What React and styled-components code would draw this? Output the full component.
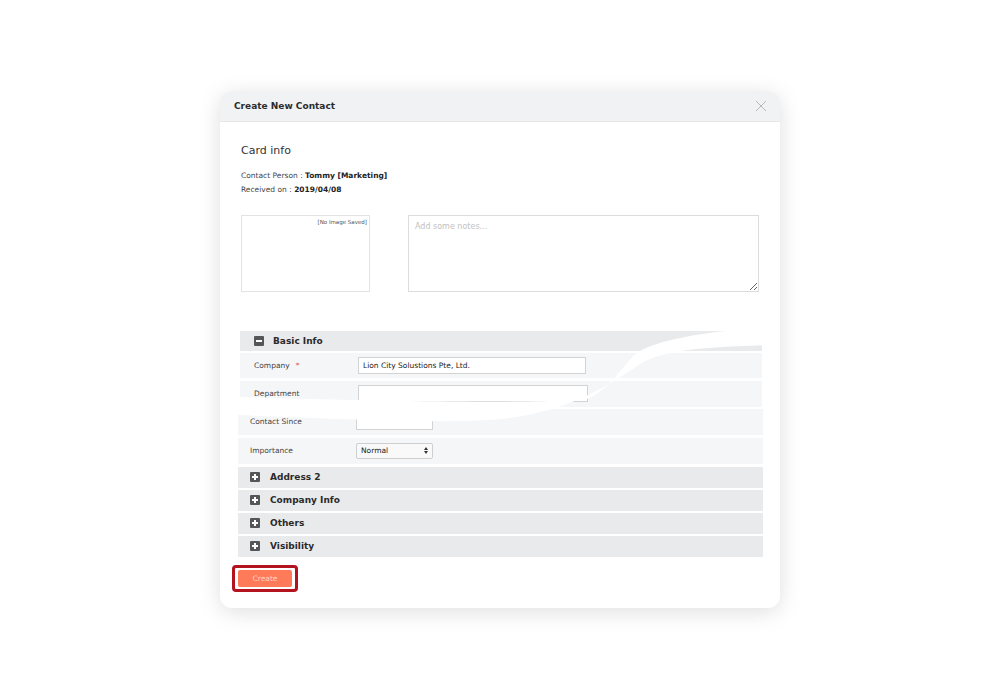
import styled, { createGlobalStyle } from "styled-components"

const GlobalStyle = createGlobalStyle`
  html, body {
    margin: 0;
    padding: 0;
    background: #fff;
    font-family: "DejaVu Sans", Verdana, sans-serif;
    color: #333;
  }
`

const Page = styled.div`
  height: 700px;
  display: flex;
  align-items: center;
  justify-content: center;
`

const Modal = styled.div`
  width: 560px;
  height: 517px;
  margin-top: -2px;
  background: #fff;
  border-radius: 12px;
  overflow: hidden;
  box-shadow: 0 4px 22px rgba(0, 0, 0, 0.13);
  display: flex;
  flex-direction: column;
`

const Header = styled.div`
  height: 31px;
  flex: none;
  background: #f1f2f4;
  border-bottom: 1px solid #e6e7e9;
  box-sizing: border-box;
  display: flex;
  align-items: center;
  justify-content: space-between;
  padding: 0 13px 0 14px;
`

const Title = styled.div`
  font-size: 9px;
  font-weight: bold;
  color: #2b2b2b;
`

const Body = styled.div`
  padding: 0 17px 0 18px;
`

const CardTitle = styled.div`
  margin: 22px 0 0 3px;
  font-size: 11px;
  color: #333;
`

const MetaBlock = styled.div`
  margin: 12px 0 0 3px;
  font-size: 7.5px;
  line-height: 14px;
  color: #444;
  b {
    color: #222;
  }
`

const Attach = styled.div`
  display: flex;
  gap: 38px;
  margin: 18px 0 0 3px;
`

const ImageBox = styled.div`
  width: 129px;
  height: 77px;
  box-sizing: border-box;
  border: 1px solid #e3e3e3;
  font-size: 5.5px;
  color: #555;
  text-align: right;
  padding: 3px 2px;
`

const Notes = styled.textarea`
  width: 351px;
  height: 77px;
  box-sizing: border-box;
  border: 1px solid #dcdcdc;
  font-family: inherit;
  font-size: 8px;
  padding: 6px 6px;
  color: #333;
  &::placeholder {
    color: #c2c2c2;
  }
`

const Form = styled.div`
  position: relative;
  margin-top: 39px;
`

const Piece = styled.div`
  margin-left: ${(p) => p.$shift}px;
  width: ${(p) => p.$width}px;
`

const SectionBar = styled.div`
  height: ${(p) => (p.$tall ? 20 : 21)}px;
  margin-top: ${(p) => p.$mt}px;
  background: #e9eaec;
  display: flex;
  align-items: center;
  gap: ${(p) => p.$gap}px;
  padding-left: ${(p) => p.$pad}px;
  font-size: 9px;
  font-weight: bold;
  color: #2b2b2b;
`

const Toggle = styled.span`
  width: 10px;
  height: 10px;
  background: #55565a;
  border-radius: 1px;
  position: relative;
  flex: none;
  &::before,
  &::after {
    content: "";
    position: absolute;
    background: #fff;
    left: 2px;
    top: 4px;
    width: 6px;
    height: 2px;
  }
  &::after {
    display: ${(p) => (p.$open ? "none" : "block")};
    left: 4px;
    top: 2px;
    width: 2px;
    height: 6px;
  }
`

const FieldRow = styled.div`
  height: ${(p) => p.$h || 26}px;
  margin-top: ${(p) => p.$mt}px;
  background: #f5f6f8;
  display: flex;
  align-items: center;
  padding-left: ${(p) => p.$pad}px;
`

const Label = styled.div`
  width: ${(p) => p.$w}px;
  flex: none;
  font-size: 7.5px;
  color: #444;
  span {
    color: #e8505b;
    margin-left: 6px;
  }
`

const TextInput = styled.div`
  width: ${(p) => p.$w}px;
  height: 17px;
  box-sizing: border-box;
  border: 1px solid #d3d3d3;
  background: #fff;
  font-size: 7.5px;
  color: #222;
  padding: 0 4px;
  display: flex;
  align-items: center;
`

const Select = styled.div`
  width: 77px;
  height: 16px;
  box-sizing: border-box;
  border: 1px solid #cfcfcf;
  border-radius: 2px;
  background: #f9f9f9;
  font-size: 7.5px;
  color: #222;
  padding: 0 4px;
  display: flex;
  align-items: center;
  justify-content: space-between;
`

const Wave = styled.svg`
  position: absolute;
  left: 0;
  top: -11px;
  pointer-events: none;
`

const Footer = styled.div`
  margin: 8px 0 0 -6px;
`

const Highlight = styled.div`
  display: inline-block;
  border: 3px solid #b3131f;
  border-radius: 4px;
  padding: 2px 3px;
`

const CreateButton = styled.button`
  width: 54px;
  height: 17px;
  border: none;
  border-radius: 2px;
  background: #ff7a59;
  color: #ffd2c4;
  font-family: inherit;
  font-size: 7.5px;
  padding: 0;
  display: block;
`

function Section({ title, open, mt = 2, pad, gap }) {
  return (
    <SectionBar $mt={mt} $tall={open} $pad={pad} $gap={gap}>
      <Toggle $open={open} />
      {title}
    </SectionBar>
  )
}

export default function App() {
  return (
    <>
      <GlobalStyle />
      <Page>
        <Modal>
          <Header>
            <Title>Create New Contact</Title>
            <svg width="12" height="12" viewBox="0 0 12 12">
              <path d="M1 1L11 11M11 1L1 11" stroke="#b8b8b8" strokeWidth="1" />
            </svg>
          </Header>
          <Body>
            <CardTitle>Card info</CardTitle>
            <MetaBlock>
              <div>
                Contact Person : <b>Tommy [Marketing]</b>
              </div>
              <div>
                Received on : <b>2019/04/08</b>
              </div>
            </MetaBlock>
            <Attach>
              <ImageBox>[No Image Saved]</ImageBox>
              <Notes placeholder="Add some notes..." />
            </Attach>

            <Form>
              <Piece $shift={2} $width={522}>
                <Section title="Basic Info" open mt={0} pad={14} gap={9} />
                <FieldRow $mt={2} $h={25} $pad={14}>
                  <Label $w={104}>
                    Company<span>*</span>
                  </Label>
                  <TextInput $w={228}>Lion City Solustions Pte, Ltd.</TextInput>
                </FieldRow>
                <FieldRow $mt={3} $pad={14}>
                  <Label $w={104}>Department</Label>
                  <TextInput $w={230} />
                </FieldRow>
              </Piece>
              <Piece $shift={0} $width={525}>
                <FieldRow $mt={2} $pad={12}>
                  <Label $w={106}>Contact Since</Label>
                  <TextInput $w={77} />
                </FieldRow>
                <FieldRow $mt={3} $pad={12}>
                  <Label $w={106}>Importance</Label>
                  <Select>
                    Normal
                    <svg width="4" height="7" viewBox="0 0 4 7">
                      <path d="M0 3L2 0L4 3ZM0 4L2 7L4 4Z" fill="#333" />
                    </svg>
                  </Select>
                </FieldRow>
                <Section title="Address 2" mt={3} pad={12} gap={10} />
                <Section title="Company Info" pad={12} gap={10} />
                <Section title="Others" pad={12} gap={10} />
                <Section title="Visibility" pad={12} gap={10} />
              </Piece>

              <Wave width="532" height="110" viewBox="238 320 532 110">
                <path
                  d="M745 329 C700 333 660 340 640 351 C625 360 615 385 590 398 C560 404 400 402 236 397 L236 415 C350 419 460 425 510 418 C570 410 610 385 640 364 C660 352 690 347 770 345 L770 326 L745 326 Z"
                  fill="#fff"
                />
              </Wave>
            </Form>

            <Footer>
              <Highlight>
                <CreateButton>Create</CreateButton>
              </Highlight>
            </Footer>
          </Body>
        </Modal>
      </Page>
    </>
  )
}
